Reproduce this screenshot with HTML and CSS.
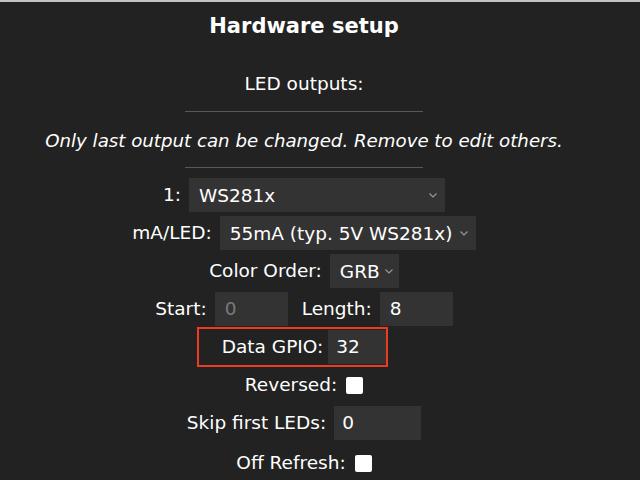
FILE: index.html
```html
<!DOCTYPE html>
<html>
<head>
<meta charset="utf-8">
<link rel="stylesheet" href="styles.css">
</head>
<body>
<div class="topbar"></div>
<main class="page">
  <h2 class="title">Hardware setup</h2>
  <div class="subhead">LED outputs:</div>
  <div class="rule"></div>
  <div class="note">Only last output can be changed. Remove to edit others.</div>
  <div class="rule rule-b"></div>
  <div class="form">
    <div class="row">
      <span class="lbl">1:</span>
      <div class="sel sel-wide"><span>WS281x</span><svg class="chev" width="8" height="5" viewBox="0 0 8 5"><polyline points="0.5,0.5 4,4 7.5,0.5" fill="none" stroke="#9a9a9a" stroke-width="1.1"/></svg></div>
    </div>
    <div class="row">
      <span class="lbl">mA/LED:</span>
      <div class="sel sel-wide2"><span>55mA (typ. 5V WS281x)</span><svg class="chev" width="8" height="5" viewBox="0 0 8 5"><polyline points="0.5,0.5 4,4 7.5,0.5" fill="none" stroke="#9a9a9a" stroke-width="1.1"/></svg></div>
    </div>
    <div class="row">
      <span class="lbl">Color Order:</span>
      <div class="sel sel-small"><span>GRB</span><svg class="chev" width="8" height="5" viewBox="0 0 8 5"><polyline points="0.5,0.5 4,4 7.5,0.5" fill="none" stroke="#9a9a9a" stroke-width="1.1"/></svg></div>
    </div>
    <div class="row">
      <span class="lbl">Start:</span>
      <div class="inp inp-73 disabled">0</div>
      <span class="lbl lbl-sp">Length:</span>
      <div class="inp inp-73">8</div>
    </div>
    <div class="row row-hl">
      <div class="highlight">
        <span class="lbl">Data GPIO:</span>
        <div class="inp inp-58 inp-tight">32</div>
      </div>
    </div>
    <div class="row">
      <span class="lbl">Reversed:</span>
      <span class="check"></span>
    </div>
    <div class="row">
      <span class="lbl">Skip first LEDs:</span>
      <div class="inp inp-87 inp-tight">0</div>
    </div>
    <div class="row row-last">
      <span class="lbl">Off Refresh:</span>
      <span class="check"></span>
    </div>
  </div>
</main>
</body>
</html>
```

FILE: styles.css
```css
html, body {
  margin: 0;
  padding: 0;
  background: #222222;
  height: 100%;
  overflow: hidden;
}
body {
  font-family: "DejaVu Sans", Verdana, sans-serif;
  color: #ffffff;
  font-size: 18.5px;
}
.topbar {
  height: 2px;
  background: #c4c4c4;
}
.page {
  width: 608px;
  display: flex;
  flex-direction: column;
  align-items: center;
}
.title {
  margin: 10px 0 0 0;
  font-size: 21px;
  font-weight: bold;
  line-height: 28px;
}
.subhead {
  margin-top: 26px;
  line-height: 36px;
}
.rule {
  margin-top: 9px;
  width: 238px;
  height: 1px;
  background: #5a5a5a;
}
.note {
  margin-top: 11px;
  font-style: italic;
  font-size: 18.2px;
  line-height: 36px;
}
.rule-b {
  margin-top: 8px;
}
.form {
  margin-top: 10px;
  display: flex;
  flex-direction: column;
  align-items: center;
  gap: 4px;
}
.row {
  display: flex;
  align-items: center;
  justify-content: center;
  height: 34px;
  gap: 8px;
}
.row-last {
  margin-top: 2px;
}
.lbl {
  white-space: nowrap;
  line-height: 34px;
}
.lbl-sp {
  margin-left: 6px;
}
.sel {
  box-sizing: border-box;
  height: 34px;
  background: #333333;
  display: flex;
  align-items: center;
  justify-content: space-between;
  padding: 0 8px 0 10px;
  white-space: nowrap;
}
.sel-wide { width: 256px; }
.sel-wide2 { width: 256px; }
.sel-small { width: 69px; padding-right: 6px; }
.chev { flex: none; margin-top: 1px; }
.inp {
  box-sizing: border-box;
  height: 34px;
  background: #333333;
  padding: 0 10px;
  line-height: 34px;
  text-align: left;
}
.inp-tight { padding-left: 8px; }
.inp-73 { width: 73px; }
.inp-58 { width: 58px; }
.inp-87 { width: 87px; }
.disabled { color: #7a7a7a; }
.row-hl {
  height: 40px;
  margin: -3px 0;
}
.highlight {
  display: flex;
  align-items: center;
  gap: 5px;
  border: 2px solid #ee3a22;
  padding: 1px 0 1px 23px;
  margin-right: 23px;
}
.check {
  display: block;
  width: 17px;
  height: 17px;
  background: #ffffff;
  border-radius: 2px;
  margin-left: 1px;
}
```
